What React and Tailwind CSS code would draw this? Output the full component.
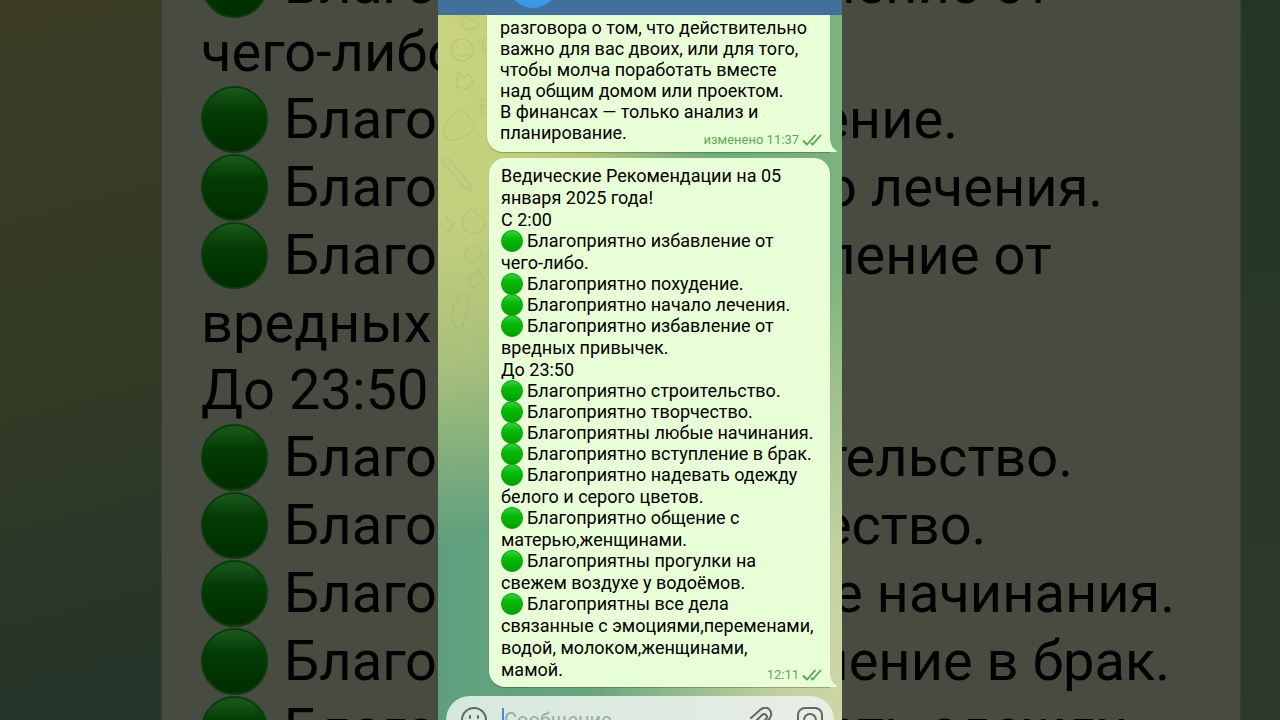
import React from 'react';

const firstMessage = [
  'разговора о том, что действительно',
  'важно для вас двоих, или для того,',
  'чтобы молча поработать вместе',
  'над общим домом или проектом.',
  'В финансах — только анализ и',
  'планирование.',
];

const secondMessage = [
  { text: 'Ведические Рекомендации на 05' },
  { text: 'января 2025 года!' },
  { text: 'С 2:00' },
  { text: 'Благоприятно избавление от', dot: true },
  { text: 'чего-либо.' },
  { text: 'Благоприятно похудение.', dot: true },
  { text: 'Благоприятно начало лечения.', dot: true },
  { text: 'Благоприятно избавление от', dot: true },
  { text: 'вредных привычек.' },
  { text: 'До 23:50' },
  { text: 'Благоприятно строительство.', dot: true },
  { text: 'Благоприятно творчество.', dot: true },
  { text: 'Благоприятны любые начинания.', dot: true },
  { text: 'Благоприятно вступление в брак.', dot: true },
  { text: 'Благоприятно надевать одежду', dot: true },
  { text: 'белого и серого цветов.' },
  { text: 'Благоприятно общение с', dot: true },
  { text: 'матерью,женщинами.' },
  { text: 'Благоприятны прогулки на', dot: true },
  { text: 'свежем воздухе у водоёмов.' },
  { text: 'Благоприятны все дела', dot: true },
  { text: 'связанные с эмоциями,переменами,' },
  { text: 'водой, молоком,женщинами,' },
  { text: 'мамой.' },
];

// part of the message that is visible in the enlarged backdrop
const backdropLines = secondMessage.slice(3, 15);

const Ticks = () => (
  <svg viewBox="0 0 20 12" className="h-3 w-5" fill="none" stroke="#55a650" strokeWidth="1.8" strokeLinecap="round" strokeLinejoin="round">
    <path d="M1.5 7l3.5 3.5L13 1.5M9.5 9.3l1.2 1.2L18.5 1.5" />
  </svg>
);

const Tail = () => (
  <svg viewBox="0 0 8 16" className="absolute -right-[7px] bottom-0 h-4 w-2" fill="#e9ffd7">
    <path d="M0 0h1c0 7 1.500 11.500 6.500 14.500c.5.600 0 1.500-.8 1.500H0z" />
  </svg>
);

const Doodles = () => (
  <svg viewBox="0 0 60 700" className="absolute left-0 top-4 w-[60px]" fill="none" stroke="#7c9a4a" strokeOpacity="0.2" strokeWidth="1.2" strokeLinecap="round">
    <path d="M24 4q4-6 8 0q6-2 8 4q0 6-8 5q-10 1-8-9z" />
    <circle cx="24" cy="34" r="11" />
    <path d="M19 32v-2M28 32v-2M18 38q6 5 12 0" />
    <path d="M45 24v12l6-2v-12zM20 56l5 6 6-4 4 8-6 7-11-2z" />
    <path d="M5 118q2-18 20-24l12 16q-8 14-26 14zM12 112h.5M22 104h.5M24 114h.5" />
    <path d="M44 84h6v14h-6zM44 89h6" />
    <path d="M4 144l6-2 22 26-4 5-21-24zM28 173l6 2-2-7" />
    <path d="M26 200q8-12 14 0q10 2 6 12q-6 8-16 4q-8-4-4-16zM32 206v1M40 206v1" />
    <path d="M8 200l3 6 6 1-5 4 1 6-5-3" />
    <circle cx="35" cy="238" r="8" />
    <path d="M14 298q2-18 14-20l4 8-8 26q-10 2-10-14zM30 262l12-8 4 10-10 8z" />
  </svg>
);

const Backdrop = () => (
  <div aria-hidden="true" className="absolute inset-0 flex justify-center overflow-hidden bg-[linear-gradient(165deg,#3d3d25_0%,#333b25_35%,#22342a_75%,#20332a_100%)]">
    <div className="absolute inset-y-0 right-0 w-1/2 bg-[linear-gradient(180deg,#243725_0%,#2a3827_60%,#2e392d_100%)]" />
    <div className="relative -mt-[50px] ml-[161px] mr-[39px] w-full border-x border-[#3b4035] bg-[#474b40] pl-[39px] text-[56px] text-black">
      {backdropLines.map((line, i) => (
        <div key={i} className={line.dot ? 'flex h-[68px] items-center whitespace-nowrap' : 'flex h-[67px] items-center whitespace-nowrap'}>
          {line.dot && (
            <span className="mr-4 size-[67px] shrink-0 rounded-full border-2 border-[#0a3d0c] bg-[linear-gradient(180deg,#1a5a1c_0%,#043c04_35%,#002c00_100%)]" />
          )}
          {line.text}
        </div>
      ))}
    </div>
  </div>
);

const App = () => {
  return (
    <div className="relative h-screen overflow-hidden bg-[#262f24] font-[Roboto,sans-serif]">
      <Backdrop />
      <main className="relative mx-auto flex h-full w-full max-w-[404px] flex-col overflow-hidden bg-[radial-gradient(ellipse_70%_70%_at_0%_5%,#c9d37f_0%,#c1ce7c_40%,#a9c07b_65%,transparent_100%),radial-gradient(ellipse_at_110%_95%,#d3d9ab_0%,#c4d2a0_15%,transparent_45%),linear-gradient(90deg,#5f9f7e_0%,#7bb27e_100%)]">
        <Doodles />
        <header className="relative h-[15px] shrink-0 bg-[#41709b]">
          <div className="absolute bottom-[7px] left-[70px] size-[50px] rounded-full bg-[#3b9ae8]" />
        </header>

        <article className="relative ml-[49px] mr-3 shrink-0 rounded-bl-2xl bg-[#e9ffd7] pb-[9px] pl-[13px] pt-[2px] text-[18px] text-black shadow-[0_1px_1px_#00000040]">
          {firstMessage.map((line) => (
            <div key={line} className="whitespace-nowrap leading-[21px]">{line}</div>
          ))}
          <div className="absolute bottom-[3px] right-2 flex items-center gap-[3px] text-[13px] leading-[18px] text-[#62a95c]">
            <span>изменено 11:37</span>
            <Ticks />
          </div>
          <Tail />
        </article>

        <article className="relative ml-[51px] mr-3 mt-[6px] shrink-0 rounded-2xl rounded-br-none bg-[#e9ffd7] pb-[7px] pl-3 pt-[6px] text-[18px] text-black shadow-[0_1px_1px_#00000040]">
          {secondMessage.map((line, i) => (
            <div key={i} className={line.dot ? 'flex h-[21px] items-center whitespace-nowrap' : 'flex h-[22px] items-center whitespace-nowrap'}>
              {line.dot && (
                <span className="mr-1 size-[22px] shrink-0 rounded-full border border-[#0f9a14] bg-[linear-gradient(180deg,#35d13a_0%,#06bd0a_35%,#00a000_100%)]" />
              )}
              {line.text}
            </div>
          ))}
          <div className="absolute bottom-[3px] right-2 flex items-center gap-[3px] text-[13px] leading-[18px] text-[#62a95c]">
            <span>12:11</span>
            <Ticks />
          </div>
          <Tail />
        </article>

        <form className="relative mx-2 mt-[9px] flex h-12 shrink-0 items-center rounded-full bg-[linear-gradient(90deg,#d6e8dc,#e8eee4)] pl-[15px] pr-[11px] text-[#5f6866]">
          <button type="button" aria-label="Эмодзи">
            <svg viewBox="0 0 26 26" className="size-[26px]" fill="none" stroke="currentColor" strokeWidth="2" strokeLinecap="round">
              <circle cx="13" cy="13" r="12" />
              <path d="M9 9v2M17 9v2M7 16q6 6 12 0" />
            </svg>
          </button>
          <input aria-label="Сообщение" placeholder="Сообщение" className="ml-[15px] min-w-0 flex-1 border-l-2 border-[#3d8fd9] bg-transparent text-[20px] leading-6 outline-none placeholder:text-[#9aaaa4]" />
          <button type="button" aria-label="Прикрепить" className="mr-[22px]">
            <svg viewBox="0 0 26 26" className="size-[26px]" fill="none" stroke="currentColor" strokeWidth="2" strokeLinecap="round" strokeLinejoin="round">
              <path d="M2 11L11 3q5-4 9-1q4 4 1 9L12 22q-4 3-7 0t0-6l8-8q2-2 4 0t0 4l-7 8" />
            </svg>
          </button>
          <button type="button" aria-label="Камера">
            <svg viewBox="0 0 26 26" className="size-[26px]" fill="none" stroke="currentColor" strokeWidth="2">
              <rect x="1" y="1" width="24" height="24" rx="7" />
              <circle cx="13" cy="13" r="6" />
            </svg>
          </button>
        </form>
      </main>
    </div>
  );
};

export default App;
